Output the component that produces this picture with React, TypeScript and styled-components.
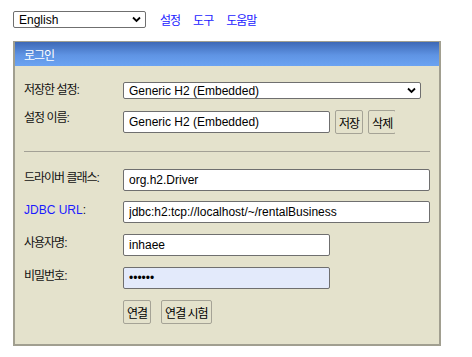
import React from 'react';
import styled, { createGlobalStyle } from 'styled-components';

const GlobalStyle = createGlobalStyle`
  body {
    margin: 0;
    background: #ffffff;
    font-family: "Liberation Sans", Arial, "Noto Sans CJK KR", sans-serif;
    font-size: 12px;
    color: #000;
  }
`;

const Page = styled.div`
  padding: 11px 0 0 13px;
  width: 428px;
`;

const TopBar = styled.div`
  display: flex;
  align-items: center;
  height: 17px;
`;

const SelectWrap = styled.div<{ $width: number }>`
  position: relative;
  width: ${p => p.$width}px;
  height: 17px;
  flex: none;
`;

const Select = styled.select`
  appearance: none;
  width: 100%;
  height: 100%;
  box-sizing: border-box;
  margin: 0;
  padding: 0 0 0 5px;
  border: 1px solid #6f6f6f;
  border-radius: 2px;
  background: #fff;
  font: inherit;
  font-size: 12px;
  color: #000;
`;

const Chevron = styled.svg`
  position: absolute;
  right: 5px;
  top: 5px;
  width: 9px;
  height: 7px;
  pointer-events: none;
`;

const NavLinks = styled.nav`
  display: flex;
  gap: 13px;
  margin-left: 14px;
`;

const NavLink = styled.a`
  color: #1a1aff;
  text-decoration: none;
  letter-spacing: -1px;
  font-size: 12px;
`;

const Panel = styled.div`
  margin-top: 13px;
  border: 2px solid #a19f90;
  border-top-width: 1px;
  background: #e4e2cc;
`;

const PanelHeader = styled.div`
  height: 24px;
  display: flex;
  align-items: center;
  padding-left: 9px;
  background: linear-gradient(#3d68b6, #5f94e4 55%, #6ba3f2);
  color: #fff;
  letter-spacing: -1px;
  font-size: 12px;
`;

const PanelBody = styled.div`
  padding: 16px 9px 20px 9px;
  display: flex;
  flex-direction: column;
`;

const Row = styled.div<{ $mt?: number }>`
  display: flex;
  align-items: flex-start;
  margin-top: ${p => p.$mt ?? 0}px;
`;

const Label = styled.div<{ $pt?: number }>`
  width: 99px;
  flex: none;
  padding-top: ${p => p.$pt ?? 1}px;
  line-height: 14px;
  letter-spacing: -1px;
  color: #111;
`;

const LinkLabel = styled.a`
  color: #1a1aff;
  text-decoration: none;
  letter-spacing: 0;
`;

const Input = styled.input<{ $width: number; $autofill?: boolean }>`
  width: ${p => p.$width}px;
  height: 22px;
  box-sizing: border-box;
  margin: 0;
  padding: 0 5px;
  border: 1px solid #6f6f6f;
  border-radius: 2px;
  background: ${p => (p.$autofill ? '#e3eafb' : '#fff')};
  font: inherit;
  font-size: 12px;
  color: #000;
  flex: none;
`;

const Controls = styled.div<{ $clip?: number }>`
  display: flex;
  align-items: center;
  gap: 5px;
  ${p => (p.$clip ? `width: ${p.$clip}px; overflow: hidden;` : '')}
`;

const Button = styled.button`
  height: 24px;
  box-sizing: border-box;
  margin: 0;
  padding: 0 3px;
  border: 1px solid #a5a396;
  border-radius: 2px;
  background: #e4e2cc;
  font: inherit;
  font-size: 12px;
  letter-spacing: -1px;
  color: #000;
  flex: none;
`;

const Divider = styled.div`
  margin: 17px 0 0 0;
  width: 406px;
  border-top: 1px solid #a3a196;
`;

const ButtonRow = styled.div`
  display: flex;
  gap: 10px;
  margin-left: 99px;
  margin-top: 11px;
`;

const ChevronIcon = () => (
  <Chevron viewBox="0 0 9 7">
    <path d="M1 1.5 L4.5 5 L8 1.5" fill="none" stroke="#000" strokeWidth="1.8" />
  </Chevron>
);

export default function App() {
  return (
    <>
      <GlobalStyle />
      <Page>
        <TopBar>
          <SelectWrap $width={133}>
            <Select defaultValue="en">
              <option value="en">English</option>
            </Select>
            <ChevronIcon />
          </SelectWrap>
          <NavLinks>
            <NavLink href="#">설정</NavLink>
            <NavLink href="#">도구</NavLink>
            <NavLink href="#">도움말</NavLink>
          </NavLinks>
        </TopBar>

        <Panel>
          <PanelHeader>로그인</PanelHeader>
          <PanelBody>
            <Row>
              <Label $pt={1}>저장한 설정:</Label>
              <SelectWrap $width={298}>
                <Select defaultValue="h2">
                  <option value="h2">Generic H2 (Embedded)</option>
                </Select>
                <ChevronIcon />
              </SelectWrap>
            </Row>
            <Row $mt={11}>
              <Label $pt={1}>설정 이름:</Label>
              <Controls $clip={272}>
                <Input $width={207} defaultValue="Generic H2 (Embedded)" />
                <Button>저장</Button>
                <Button>삭제</Button>
              </Controls>
            </Row>
            <Divider />
            <Row $mt={17}>
              <Label $pt={2}>드라이버 클래스:</Label>
              <Input $width={307} defaultValue="org.h2.Driver" />
            </Row>
            <Row $mt={10}>
              <Label $pt={2}>
                <LinkLabel href="#">JDBC URL</LinkLabel>:
              </Label>
              <Input $width={307} defaultValue="jdbc:h2:tcp://localhost/~/rentalBusiness" />
            </Row>
            <Row $mt={11}>
              <Label $pt={2}>사용자명:</Label>
              <Input $width={207} defaultValue="inhaee" />
            </Row>
            <Row $mt={11}>
              <Label $pt={2}>비밀번호:</Label>
              <Input $width={207} $autofill type="password" defaultValue="123456" />
            </Row>
            <ButtonRow>
              <Button>연결</Button>
              <Button>연결 시험</Button>
            </ButtonRow>
          </PanelBody>
        </Panel>
      </Page>
    </>
  );
}
